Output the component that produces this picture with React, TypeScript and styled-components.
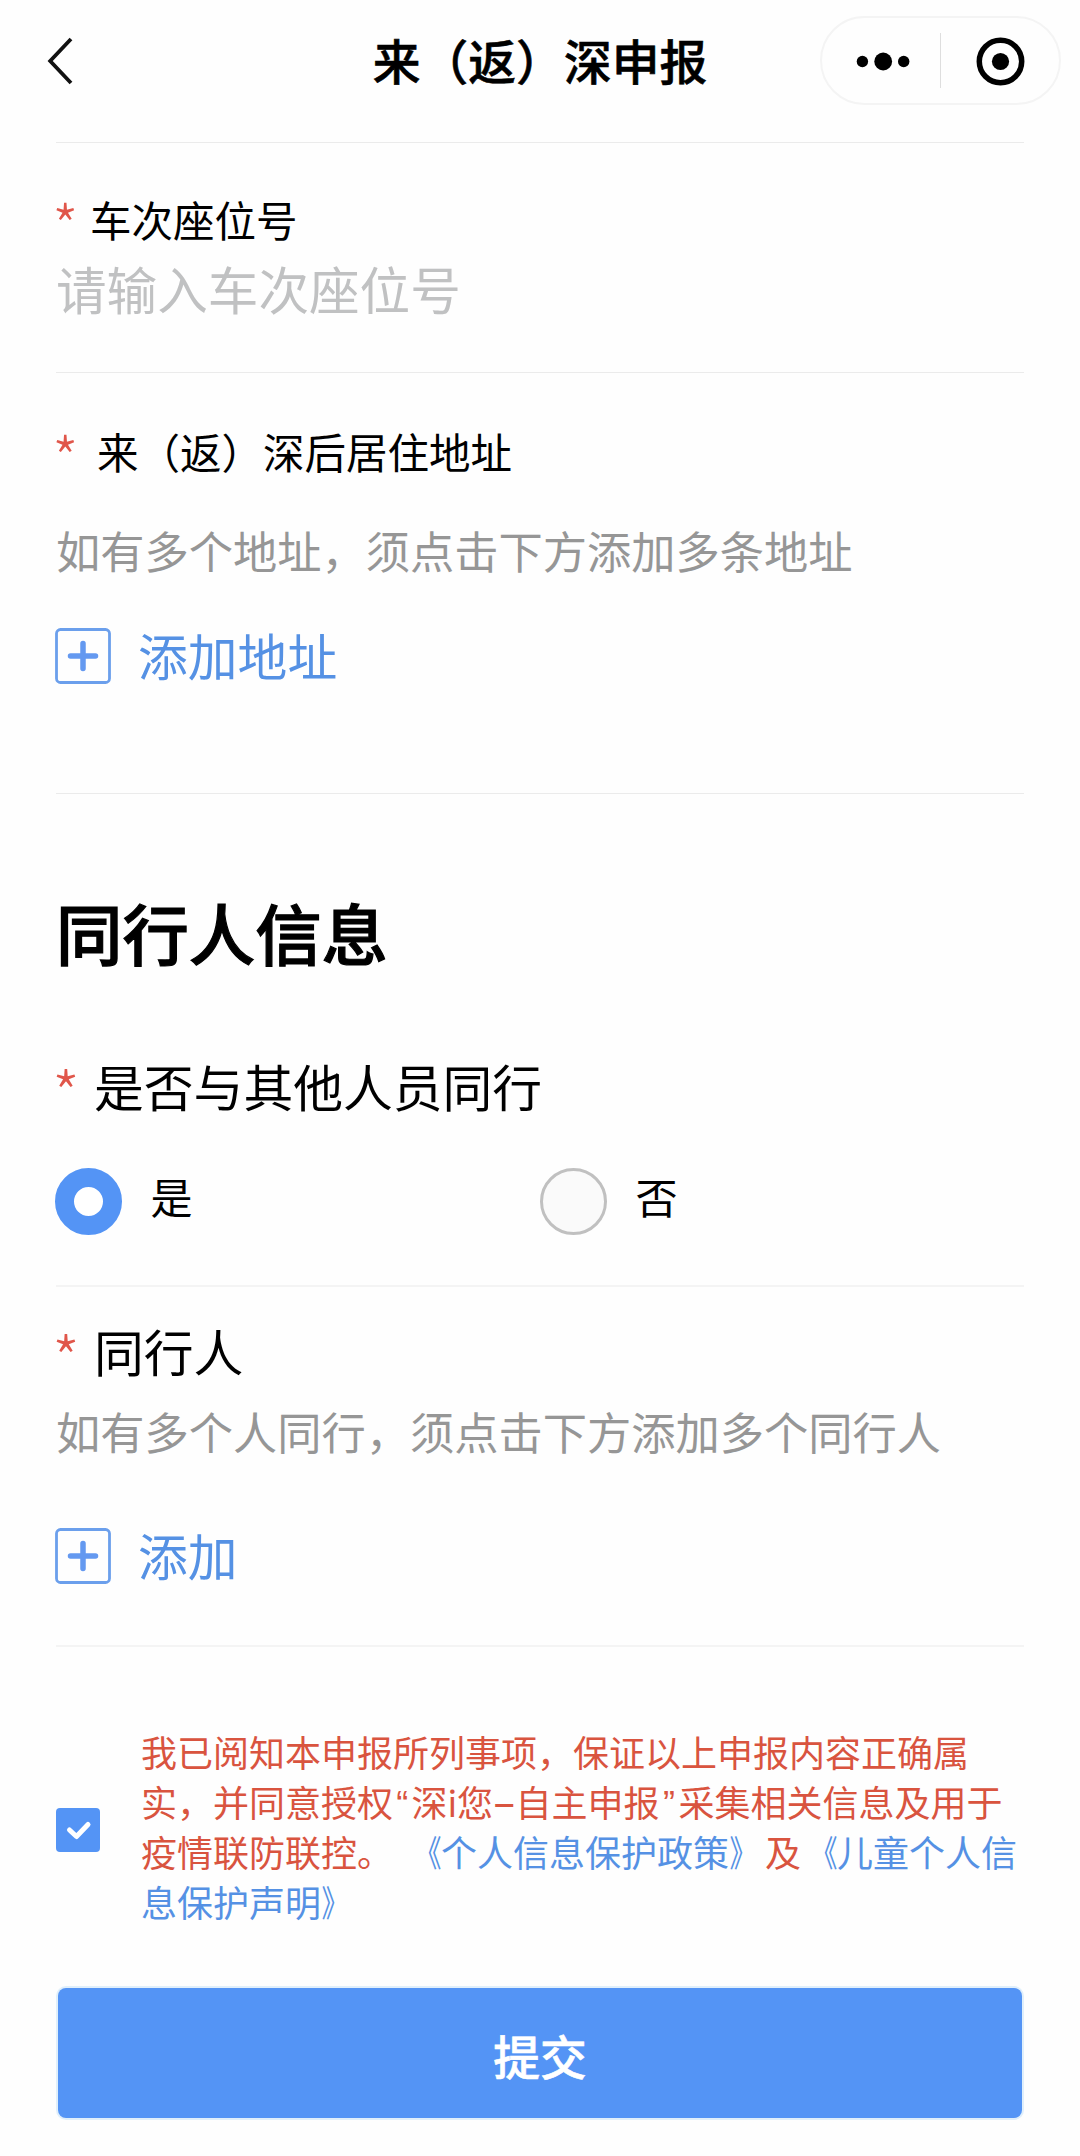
import React, { useState } from "react";
import styled, { createGlobalStyle } from "styled-components";

const BLUE = "#5494f5";
const LINK = "#5591e4";
const RED = "#d9543f";

const GlobalStyle = createGlobalStyle`
  *, *::before, *::after { box-sizing: border-box; }
  body {
    margin: 0;
    background: #fefefe;
    color: #000;
    font-family: "Noto Sans CJK SC", "Noto Sans", sans-serif;
  }
  button { font-family: inherit; }
`;

const Page = styled.div`
  width: 1080px;
  height: 2156px;
  overflow: hidden;
  display: flex;
  flex-direction: column;
`;

const NavBar = styled.header`
  height: 142px;
  flex: none;
  display: grid;
  grid-template-columns: 300px 1fr 300px;
  align-items: start;
`;

const BackButton = styled.button`
  border: 0;
  padding: 0;
  margin: 36px 0 0 46px;
  width: 30px;
  height: 50px;
  background: none;
  svg { display: block; }
`;

const Title = styled.h1`
  margin: 30px 0 0;
  font-size: 47.8px;
  line-height: 60px;
  font-weight: 500;
  -webkit-text-stroke: 0.6px #000;
  text-align: center;
  white-space: nowrap;
`;

const Capsule = styled.div`
  justify-self: end;
  margin: 16px 19px 0 0;
  width: 241px;
  height: 89px;
  border: 2px solid #f4f4f4;
  border-radius: 45px;
  display: grid;
  grid-template-columns: 118px 1px 1fr;
  align-items: center;
  justify-items: center;
`;

const CapsuleDivider = styled.span`
  width: 1px;
  height: 55px;
  background: #dedede;
`;

const Section = styled.section<{ $height: number; $line?: number; $tone?: string }>`
  flex: none;
  width: 968px;
  height: ${(p) => p.$height}px;
  margin-left: 56px;
  border-top: ${(p) => p.$line ?? 1}px solid ${(p) => p.$tone ?? "#ebebeb"};
  display: flex;
  flex-direction: column;
  align-items: flex-start;
`;

const Label = styled.div<{ $size: number; $top: number; $indent: number }>`
  margin-top: ${(p) => p.$top}px;
  height: 60px;
  line-height: 60px;
  font-size: ${(p) => p.$size}px;
  display: grid;
  grid-template-columns: ${(p) => p.$indent}px auto;
  white-space: nowrap;
`;

const Required = styled.span<{ $size?: number; $leading?: number }>`
  margin-left: -4px;
  height: 60px;
  color: #e0564a;
  font-size: ${(p) => p.$size ?? 60}px;
  font-weight: 300;
  line-height: ${(p) => p.$leading ?? 69}px;
`;

const SeatInput = styled.input`
  margin: 9px 0 0;
  padding: 0;
  border: 0;
  outline: 0;
  width: 100%;
  height: 60px;
  background: transparent;
  font: 400 50.6px/60px "Noto Sans CJK SC", sans-serif;
  &::placeholder { color: #c0c1c2; opacity: 1; }
`;

const Hint = styled.p<{ $top: number }>`
  margin: ${(p) => p.$top}px 0 0;
  height: 60px;
  line-height: 60px;
  font-size: 44.25px;
  color: #969696;
  white-space: nowrap;
`;

const AddButton = styled.button<{ $top: number }>`
  margin: ${(p) => p.$top}px 0 0 -1px;
  padding: 0;
  border: 0;
  height: 56px;
  background: none;
  display: flex;
  gap: 27px;
  color: ${LINK};
  font-size: 49.8px;
  line-height: 52px;
  svg { display: block; }
`;

const Heading = styled.h2`
  margin: 97px 0 0;
  height: 80px;
  font-size: 66.4px;
  line-height: 80px;
  font-weight: 500;
  -webkit-text-stroke: 1.2px #000;
  white-space: nowrap;
`;

const RadioGroup = styled.div`
  margin: 53px 0 0 -1px;
  display: grid;
  grid-template-columns: 485px 485px;
`;

const RadioOption = styled.label`
  height: 67px;
  display: flex;
  gap: 28.5px;
  font-size: 42px;
  line-height: 55px;
  cursor: pointer;
`;

const RadioDot = styled.input`
  appearance: none;
  flex: none;
  margin: 0;
  width: 67px;
  height: 67px;
  border-radius: 50%;
  border: 3px solid #c0c0c0;
  background: #fafafa;
  &:checked {
    border: 19.5px solid ${BLUE};
    background: #fff;
  }
`;

const Agreement = styled.div`
  margin: 79px 0 0 -0.5px;
  height: 200px;
  display: grid;
  grid-template-columns: 85.5px 890px;
`;

const CheckBox = styled.button`
  margin-top: 82px;
  padding: 0;
  border: 0;
  width: 44px;
  height: 44px;
  border-radius: 4px;
  background: ${BLUE};
  svg { display: block; }
`;

const Terms = styled.p`
  margin: 0;
  font-size: 36px;
  line-height: 50px;
  color: ${RED};
  white-space: nowrap;
`;

const Latin = styled.span<{ $width: number; $face?: string }>`
  display: inline-block;
  width: ${(p) => p.$width}px;
  text-align: center;
  line-height: 1;
  font-family: ${(p) => p.$face ?? "Inter"}, sans-serif;
`;

const Gap = styled.span`
  display: inline-block;
  width: 12px;
`;

const PolicyLink = styled.a`
  color: ${LINK};
  text-decoration: none;
`;

const Bracket = styled.span<{ $side: "left" | "right" }>`
  display: inline-block;
  width: 36px;
  line-height: 1;
  transform: scaleX(0.75);
  transform-origin: ${(p) => (p.$side === "left" ? "105%" : "5%")} 50%;
`;

const Submit = styled.button`
  margin: 62px 0 0 2px;
  padding: 3px 0 0;
  width: 964px;
  height: 130px;
  flex: none;
  border: 0;
  border-radius: 8px;
  background: ${BLUE};
  box-shadow: 0 0 0 2px #e0effb;
  color: #fff;
  font-size: 46.8px;
  font-weight: 500;
  -webkit-text-stroke: 0.6px #fff;
  line-height: 60px;
`;

const PlusIcon = () => (
  <svg width="56" height="56" viewBox="0 0 56 56" fill="none" stroke={BLUE}>
    <rect x="1.5" y="1.5" width="53" height="53" rx="4" strokeWidth="2.8" stroke="#6b9fec" />
    <path d="M28 15.5v25M15.500 28h25" strokeWidth="5.5" strokeLinecap="round" stroke="#6499f0" />
  </svg>
);

export default function App() {
  const [seat, setSeat] = useState("");
  const [together, setTogether] = useState(true);
  const [agreed, setAgreed] = useState(true);

  return (
    <Page>
      <GlobalStyle />
      <NavBar>
        <BackButton aria-label="返回">
          <svg width="30" height="50" viewBox="0 0 30 50" fill="none" stroke="#111" strokeWidth="3.8">
            <path d="M25 3 4.200 25 25 47" />
          </svg>
        </BackButton>
        <Title>来（返）深申报</Title>
        <Capsule>
          <svg width="56" height="20" viewBox="-2.700 0 56 20" overflow="visible">
            <circle cx="6.700" cy="10.500" r="5.700" />
            <circle cx="27.500" cy="10.500" r="8.900" />
            <circle cx="48" cy="10.500" r="5.700" />
          </svg>
          <CapsuleDivider />
          <svg width="50" height="50" viewBox="0 0 50 50">
            <circle cx="25.500" cy="25.500" r="21.200" fill="none" stroke="#000" strokeWidth="5.500" />
            <circle cx="25.500" cy="25.500" r="8.600" />
          </svg>
        </Capsule>
      </NavBar>

      <Section $height={230}>
        <Label $size={41.5} $top={46} $indent={34}>
          <Required>*</Required>
          <span>车次座位号</span>
        </Label>
        <SeatInput placeholder="请输入车次座位号" value={seat} onChange={(e) => setSeat(e.target.value)} />
      </Section>

      <Section $height={421}>
        <Label $size={41.5} $top={48} $indent={41}>
          <Required>*</Required>
          <span>来（返）深后居住地址</span>
        </Label>
        <Hint $top={39}>如有多个地址，须点击下方添加多条地址</Hint>
        <AddButton $top={48}>
          <PlusIcon />
          <span>添加地址</span>
        </AddButton>
      </Section>

      <Section $height={492}>
        <Heading>同行人信息</Heading>
        <Label $size={49.8} $top={84} $indent={38}>
          <Required $size={63} $leading={74}>*</Required>
          <span>是否与其他人员同行</span>
        </Label>
        <RadioGroup>
          <RadioOption>
            <RadioDot type="radio" name="together" checked={together} onChange={() => setTogether(true)} />
            <span>是</span>
          </RadioOption>
          <RadioOption>
            <RadioDot type="radio" name="together" checked={!together} onChange={() => setTogether(false)} />
            <span>否</span>
          </RadioOption>
        </RadioGroup>
      </Section>

      <Section $height={360} $line={2} $tone="#f4f4f4">
        <Label $size={49.8} $top={33} $indent={38}>
          <Required $size={63} $leading={74}>*</Required>
          <span>同行人</span>
        </Label>
        <Hint $top={21}>如有多个人同行，须点击下方添加多个同行人</Hint>
        <AddButton $top={67}>
          <PlusIcon />
          <span>添加</span>
        </AddButton>
      </Section>

      <Section $height={500} $line={2} $tone="#f4f4f4">
        <Agreement>
          <CheckBox role="checkbox" aria-checked={agreed} onClick={() => setAgreed(!agreed)}>
            {agreed && (
              <svg width="44" height="44" viewBox="0 0 44 44" fill="none" stroke="#fff" strokeWidth="5" strokeLinecap="round" strokeLinejoin="round">
                <path d="M13.500 22 20.500 28.500 32 16.500" />
              </svg>
            )}
          </CheckBox>
          <Terms>
            我已阅知本申报所列事项，保证以上申报内容正确属
            <br />
            实，并同意授权<Latin $width={18.5} $face="Liberation Sans">“</Latin>深<Latin $width={9.5}>i</Latin>您
            <Latin $width={22.5}>–</Latin>自主申报<Latin $width={19} $face="Liberation Sans">”</Latin>采集相关信息及用于
            <br />
            疫情联防联控。<Gap />
            <PolicyLink><Bracket $side="left">《</Bracket>个人信息保护政策<Bracket $side="right">》</Bracket></PolicyLink>及
            <PolicyLink><Bracket $side="left">《</Bracket>儿童个人信</PolicyLink>
            <br />
            <PolicyLink>息保护声明<Bracket $side="right">》</Bracket></PolicyLink>
          </Terms>
        </Agreement>
        <Submit>提交</Submit>
      </Section>
    </Page>
  );
}
